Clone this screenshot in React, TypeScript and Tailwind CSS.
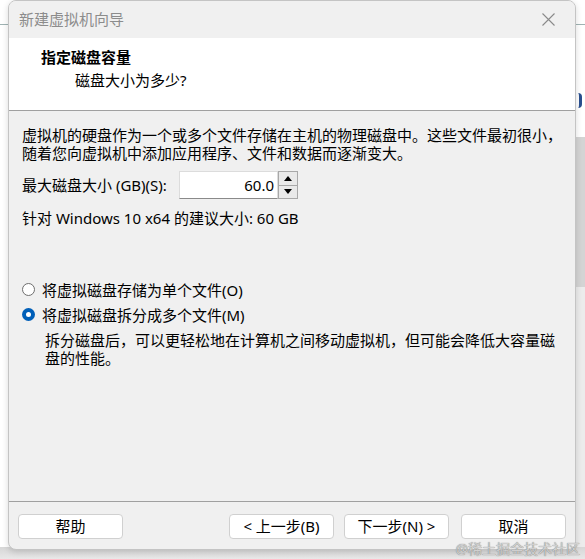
import React from "react";

const font = "font-['Noto_Sans','Noto_Sans_CJK_SC',sans-serif]";

interface WizardButtonProps {
  label: string;
  width?: string;
}

const WizardButton = ({ label, width = "w-[105px]" }: WizardButtonProps) => (
  <button
    className={`${width} h-[25px] rounded-[4px] border border-[#d0d0d0] bg-white text-[15px] leading-none text-black`}
  >
    {label}
  </button>
);

const Radio = ({ checked }: { checked: boolean }) =>
  checked ? (
    <span className="flex h-[13px] w-[13px] items-center justify-center rounded-full bg-[#005fb8]">
      <span className="h-[5px] w-[5px] rounded-full bg-white" />
    </span>
  ) : (
    <span className="h-[13px] w-[13px] rounded-full border border-[#6e6e6e] bg-white" />
  );

const SpinBox = () => (
  <div className="flex h-[28px]">
    <div className="flex w-[99px] items-center justify-end border border-[#dcdcdc] border-b-[#8a8a8a] bg-white pr-[3px] text-[15px]">
      60.0
    </div>
    <div className="flex w-[20px] flex-col border border-[#a8a8a8]">
      <div className="flex flex-1 items-center justify-center border-b border-[#a8a8a8] bg-[#e9e9e9]">
        <svg width="8" height="5" viewBox="0 0 8 5">
          <path d="M0 5 L4 0 L8 5 Z" fill="#000" />
        </svg>
      </div>
      <div className="flex flex-1 items-center justify-center bg-[#e9e9e9]">
        <svg width="8" height="5" viewBox="0 0 8 5">
          <path d="M0 0 L4 5 L8 0 Z" fill="#000" />
        </svg>
      </div>
    </div>
  </div>
);

const App = () => {
  return (
    <div
      className={`relative h-[559px] w-[585px] overflow-hidden bg-white ${font} text-black`}
    >
      {/* desktop behind the wizard */}
      <div className="absolute left-0 top-[24px] h-[1px] w-full bg-[#9fb3b3]" />
      <div className="absolute left-[576px] top-[137px] h-[150px] w-[9px] bg-[#d4d4d4]" />
      <div className="absolute left-[576px] top-[287px] h-[272px] w-[9px] bg-[#ececec]" />
      <div className="absolute left-[578px] top-[93px] h-[15px] w-[4px] rounded-r-full border-r-[3px] border-[#2a4f8f]" />
      <div className="absolute bottom-0 left-0 h-[12px] w-full bg-gradient-to-b from-[#d6d6d6] to-[#e8e8e8]" />

      {/* wizard window */}
      <div className="relative ml-[8px] flex h-[550px] w-[568px] flex-col overflow-hidden rounded-[8px] border border-[#c4c4c4] bg-[#f0f0f0] shadow-[0_2px_6px_rgba(0,0,0,0.15)]">
        <div className="flex h-[37px] items-center justify-between bg-[#f0f0f0] pl-[10px] pr-[20px]">
          <span className="text-[15px] text-[#8c8c8c]">新建虚拟机向导</span>
          <svg width="13" height="13" viewBox="0 0 13 13">
            <path
              d="M0.5 0.5 L12.5 12.5 M12.5 0.5 L0.5 12.5"
              stroke="#8a8a8a"
              strokeWidth="1.1"
            />
          </svg>
        </div>

        <div className="flex h-[73px] flex-col border-b border-[#a0a0a0] bg-white">
          <div className="ml-[32px] mt-[10px] text-[15px] font-bold leading-[18px]">
            指定磁盘容量
          </div>
          <div className="ml-[66px] mt-[5px] text-[15px] leading-[18px]">
            磁盘大小为多少?
          </div>
        </div>

        <div className="flex flex-1 flex-col whitespace-nowrap px-[13px] pt-[15px] text-[15px] leading-[18px]">
          <p>
            虚拟机的硬盘作为一个或多个文件存储在主机的物理磁盘中。这些文件最初很小，
            <br />
            随着您向虚拟机中添加应用程序、文件和数据而逐渐变大。
          </p>
          <div className="mt-[9px] flex items-center">
            <span className="w-[157px]">最大磁盘大小 (GB)(S):</span>
            <SpinBox />
          </div>
          <p className="mt-[10px]">针对 Windows 10 x64 的建议大小: 60 GB</p>

          <div className="mt-[50px] flex h-[25px] items-center gap-[7px]">
            <Radio checked={false} />
            <span>将虚拟磁盘存储为单个文件(O)</span>
          </div>
          <div className="flex h-[25px] items-center gap-[7px]">
            <Radio checked={true} />
            <span>将虚拟磁盘拆分成多个文件(M)</span>
          </div>
          <p className="ml-[23px] mt-[4px]">
            拆分磁盘后，可以更轻松地在计算机之间移动虚拟机，但可能会降低大容量磁
            <br />
            盘的性能。
          </p>
        </div>

        <div className="flex h-[48px] items-start border-t border-[#a0a0a0] px-[9px] pt-[12px]">
          <WizardButton label="帮助" />
          <div className="ml-auto flex gap-[10px]">
            <WizardButton label="< 上一步(B)" />
            <WizardButton label="下一步(N) >" />
          </div>
          <div className="ml-[12px]">
            <WizardButton label="取消" />
          </div>
        </div>
      </div>

      <div className="absolute bottom-[3px] right-[5px] text-[14px] leading-none text-[#cfcfcf] [text-shadow:0_0_1px_#666]">
        @稀土掘金技术社区
      </div>
    </div>
  );
};

export default App;
